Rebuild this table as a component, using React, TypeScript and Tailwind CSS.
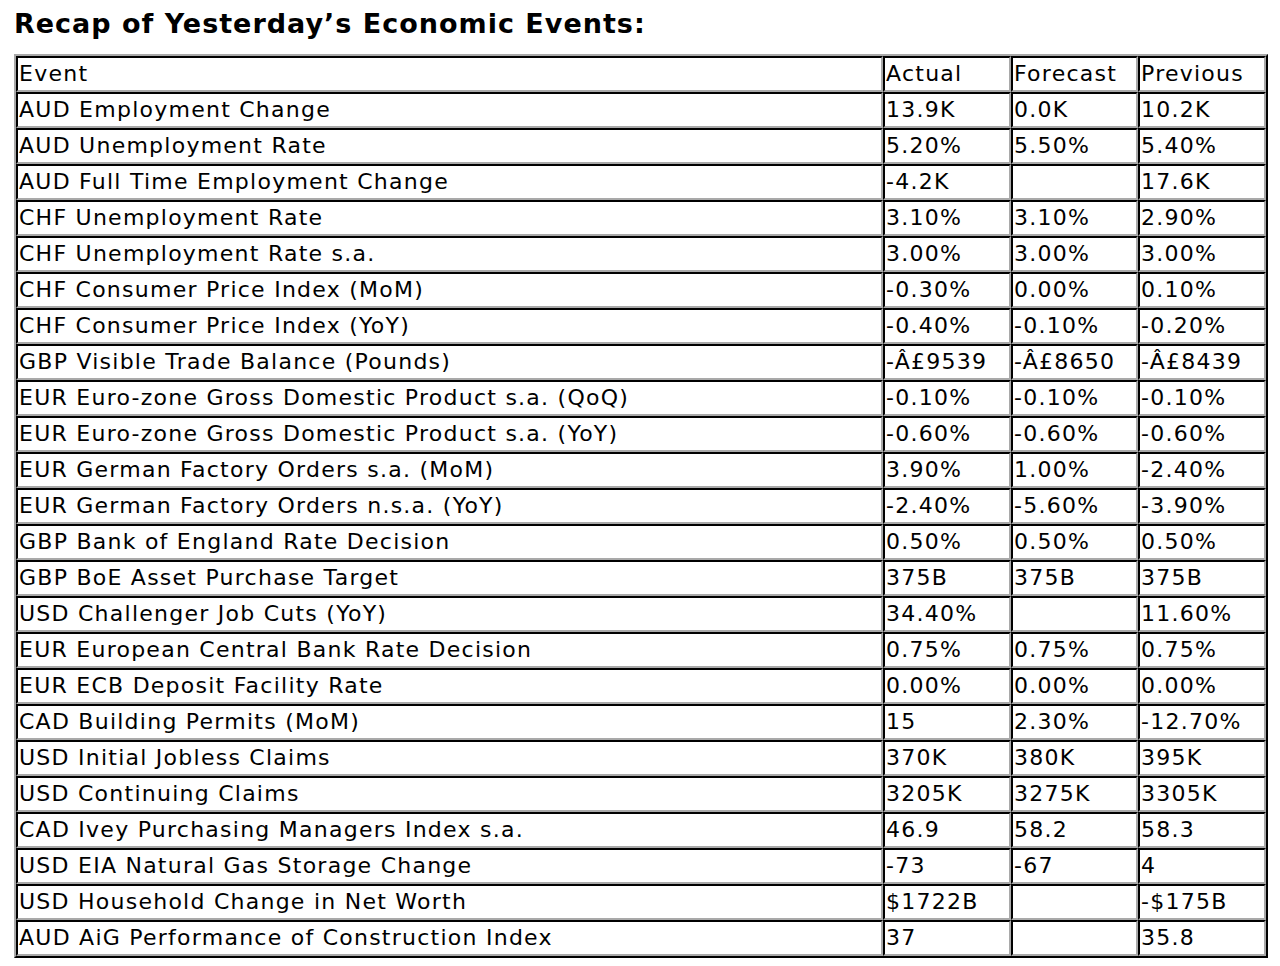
const rows: [string, string, string, string][] = [
  ["AUD Employment Change", "13.9K", "0.0K", "10.2K"],
  ["AUD Unemployment Rate", "5.20%", "5.50%", "5.40%"],
  ["AUD Full Time Employment Change", "-4.2K", "", "17.6K"],
  ["CHF Unemployment Rate", "3.10%", "3.10%", "2.90%"],
  ["CHF Unemployment Rate s.a.", "3.00%", "3.00%", "3.00%"],
  ["CHF Consumer Price Index (MoM)", "-0.30%", "0.00%", "0.10%"],
  ["CHF Consumer Price Index (YoY)", "-0.40%", "-0.10%", "-0.20%"],
  ["GBP Visible Trade Balance (Pounds)", "-Â£9539", "-Â£8650", "-Â£8439"],
  ["EUR Euro-zone Gross Domestic Product s.a. (QoQ)", "-0.10%", "-0.10%", "-0.10%"],
  ["EUR Euro-zone Gross Domestic Product s.a. (YoY)", "-0.60%", "-0.60%", "-0.60%"],
  ["EUR German Factory Orders s.a. (MoM)", "3.90%", "1.00%", "-2.40%"],
  ["EUR German Factory Orders n.s.a. (YoY)", "-2.40%", "-5.60%", "-3.90%"],
  ["GBP Bank of England Rate Decision", "0.50%", "0.50%", "0.50%"],
  ["GBP BoE Asset Purchase Target", "375B", "375B", "375B"],
  ["USD Challenger Job Cuts (YoY)", "34.40%", "", "11.60%"],
  ["EUR European Central Bank Rate Decision", "0.75%", "0.75%", "0.75%"],
  ["EUR ECB Deposit Facility Rate", "0.00%", "0.00%", "0.00%"],
  ["CAD Building Permits (MoM)", "15", "2.30%", "-12.70%"],
  ["USD Initial Jobless Claims", "370K", "380K", "395K"],
  ["USD Continuing Claims", "3205K", "3275K", "3305K"],
  ["CAD Ivey Purchasing Managers Index s.a.", "46.9", "58.2", "58.3"],
  ["USD EIA Natural Gas Storage Change", "-73", "-67", "4"],
  ["USD Household Change in Net Worth", "$1722B", "", "-$175B"],
  ["AUD AiG Performance of Construction Index", "37", "", "35.8"],
];

const cell =
  "h-[36px] px-[1px] py-0 text-left align-middle border-2 border-t-black border-l-black border-r-[#a9a9a9] border-b-[#a9a9a9] whitespace-nowrap overflow-hidden";

export default function App() {
  return (
    <div className="min-h-screen bg-white text-black font-['DejaVu_Sans',Verdana,sans-serif]">
      <div className="pl-[14px] pt-[6px]">
        <h1 className="text-[27px] leading-[36px] font-bold tracking-[1px] m-0">Recap of Yesterday’s Economic Events:</h1>
        <table className="mt-[12px] w-[1254px] table-fixed border-separate border-spacing-0 border-2 border-t-[#a9a9a9] border-l-[#a9a9a9] border-r-black border-b-black text-[22px] leading-[28px] tracking-[1.25px]">
          <colgroup>
            <col className="w-[867px]" />
            <col className="w-[128px]" />
            <col className="w-[127px]" />
            <col className="w-[128px]" />
          </colgroup>
          <tbody>
            <tr>
              <td className={cell}>Event</td>
              <td className={cell}>Actual</td>
              <td className={cell}>Forecast</td>
              <td className={cell}>Previous</td>
            </tr>
            {rows.map((r, i) => (
              <tr key={i}>
                {r.map((v, j) => (
                  <td key={j} className={cell}>{v}</td>
                ))}
              </tr>
            ))}
          </tbody>
        </table>
      </div>
    </div>
  );
}
